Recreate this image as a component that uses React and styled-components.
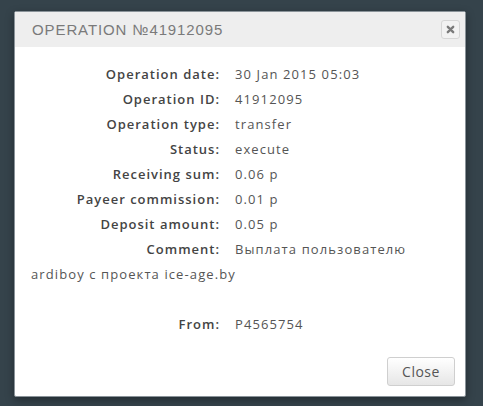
import React from 'react';
import styled, { createGlobalStyle } from 'styled-components';

const Global = createGlobalStyle`
  html, body {
    margin: 0;
    background: #35434b;
  }
  body {
    font-family: "Open Sans", "Liberation Sans", sans-serif;
  }
`

const Backdrop = styled.div`
  width: 483px;
  height: 406px;
  box-sizing: border-box;
  padding: 11px 17px 0 14px;
  overflow: hidden;
`

const Modal = styled.div`
  background: #fff;
  border: 1px solid #8a9399;
  border-radius: 2px;
  box-shadow: 0 3px 8px rgba(0, 0, 0, 0.35);
  height: 386px;
  box-sizing: border-box;
  display: flex;
  flex-direction: column;
`

const Header = styled.div`
  background: #eeeeee;
  height: 35px;
  display: flex;
  align-items: center;
  justify-content: space-between;
  padding: 0 5px 0 17px;
`

const Title = styled.h3`
  margin: 0;
  font-family: "Liberation Sans", sans-serif;
  font-weight: normal;
  font-size: 15px;
  letter-spacing: 0.9px;
  color: #7a7a7a;
  text-transform: uppercase;
`

const CloseX = styled.button`
  width: 19px;
  height: 19px;
  padding: 0;
  border: 1px solid #d6d6d6;
  border-radius: 3px;
  background: #f2f2f2;
  display: flex;
  align-items: center;
  justify-content: center;
`

const Body = styled.div`
  flex: 1;
  padding: 15px 16px 0 16px;
`

const Row = styled.div`
  font-size: 13px;
  line-height: 25px;
  color: #555;
  letter-spacing: 1.1px;
`

const Label = styled.span`
  display: inline-block;
  width: 189px;
  text-align: right;
  margin-right: 15px;
  font-weight: 600;
  color: #444;
  letter-spacing: 1px;
`

const Spacer = styled.div`
  height: 25px;
`

const Footer = styled.div`
  display: flex;
  justify-content: flex-end;
  padding: 0 10px 10px 0;
`

const Button = styled.button`
  width: 68px;
  height: 29px;
  border: 1px solid #cfcfcf;
  border-radius: 3px;
  background: linear-gradient(#ffffff, #e6e6e6);
  font-family: "Open Sans", "Liberation Sans", sans-serif;
  font-size: 14px;
  color: #555;
  letter-spacing: 0.5px;
`

const rows = [
  ['Operation date:', '30 Jan 2015 05:03'],
  ['Operation ID:', '41912095'],
  ['Operation type:', 'transfer'],
  ['Status:', 'execute'],
  ['Receiving sum:', '0.06 р'],
  ['Payeer commission:', '0.01 р'],
  ['Deposit amount:', '0.05 р'],
]

const App = () => {
  return (
    <Backdrop>
      <Global />
      <Modal>
        <Header>
          <Title>Operation №41912095</Title>
          <CloseX aria-label="close">
            <svg width="9" height="9" viewBox="0 0 10 10">
              <path d="M2 2 L8 8 M8 2 L2 8" stroke="#7a7a7a" strokeWidth="2.6" strokeLinecap="round" />
            </svg>
          </CloseX>
        </Header>
        <Body>
          {rows.map(([l, v]) => (
            <Row key={l}>
              <Label>{l}</Label>
              {v}
            </Row>
          ))}
          <Row>
            <Label>Comment:</Label>
            Выплата пользователю ardiboy с проекта ice-age.by
          </Row>
          <Spacer />
          <Row>
            <Label>From:</Label>
            P4565754
          </Row>
        </Body>
        <Footer>
          <Button>Close</Button>
        </Footer>
      </Modal>
    </Backdrop>
  );
}

export default App;
